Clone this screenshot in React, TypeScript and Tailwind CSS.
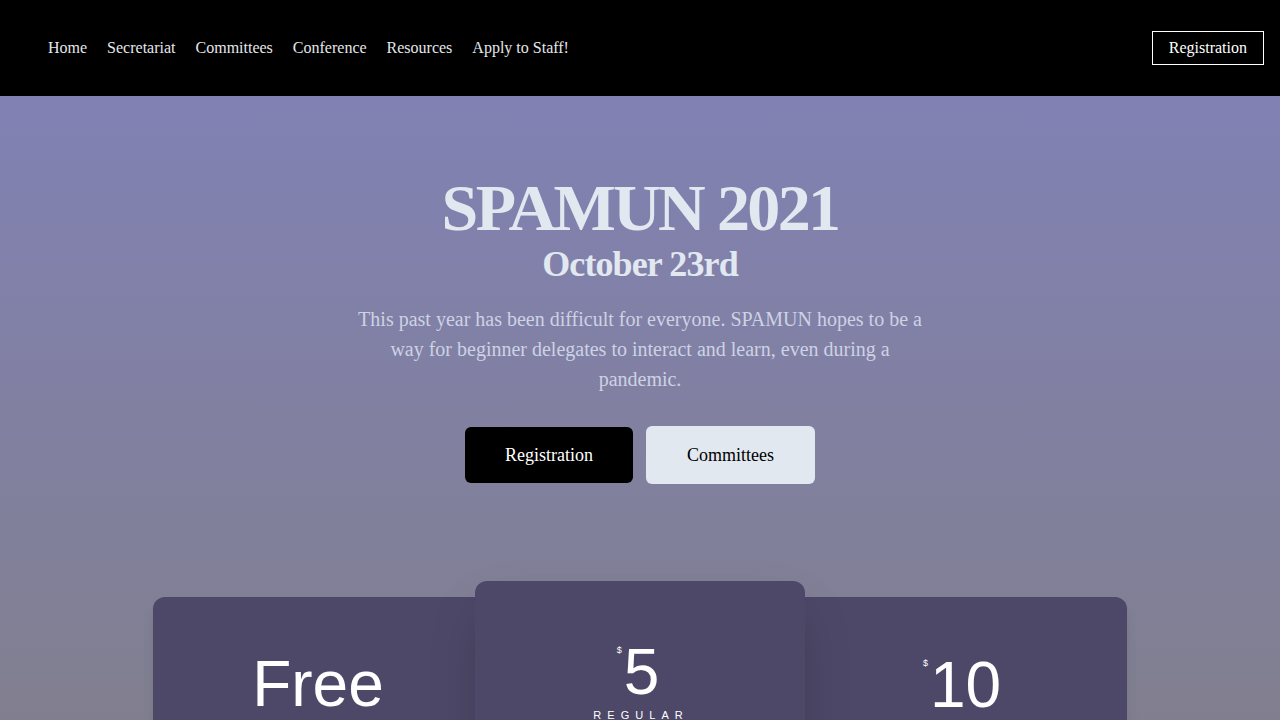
const navLinks = ["Home", "Secretariat", "Committees", "Conference", "Resources", "Apply to Staff!"];

const serif = { fontFamily: '"Liberation Serif", "Times New Roman", serif' };

function Price({ amount, label }: { amount: string; label?: string }) {
  return (
    <div className="flex flex-col items-center">
      <div className="flex items-start">
        <span className="text-[9px] leading-none mt-[6px] mr-[2px]">$</span>
        <span className="text-[64px] leading-none">{amount}</span>
      </div>
      {label && (
        <span className="mt-[6px] text-[11px] leading-none tracking-[0.55em] pl-[0.55em]">{label}</span>
      )}
    </div>
  );
}

export default function App() {
  return (
    <div className="w-full" style={serif}>
      {/* Navbar */}
      <header className="h-24 bg-black flex items-center justify-between pl-12 pr-4">
        <nav className="flex gap-5 text-base text-gray-200">
          {navLinks.map((link) => (
            <a key={link} href="#" className="hover:text-white">
              {link}
            </a>
          ))}
        </nav>
        <a href="#" className="border border-white text-white px-4 h-[34px] flex items-center text-base">
          Registration
        </a>
      </header>

      {/* Hero */}
      <section className="h-[624px] overflow-hidden bg-gradient-to-b from-[#8181b4] to-[#817f8f]">
        <div className="pt-[78px] flex flex-col items-center text-center">
          <h1 className="text-[66px] leading-[68px] font-bold tracking-[-0.04em] text-slate-200">SPAMUN 2021</h1>
          <h2 className="mt-[2px] text-4xl leading-10 font-bold tracking-[-0.025em] text-slate-200">October 23rd</h2>
          <p className="mt-5 max-w-[580px] text-xl leading-[30px] text-[#cdd2e4]">
            This past year has been difficult for everyone. SPAMUN hopes to be a way for beginner delegates to
            interact and learn, even during a pandemic.
          </p>
          <div className="mt-8 flex items-center gap-[13px]">
            <button className="w-[168px] h-14 rounded-md bg-black text-white text-lg">Registration</button>
            <button className="w-[169px] h-[58px] rounded-md bg-slate-200 text-black text-lg">Committees</button>
          </div>
        </div>

        {/* Pricing */}
        <div
          className="mt-[97px] flex justify-center items-start text-white"
          style={{ fontFamily: '"Liberation Sans", Arial, Helvetica, sans-serif' }}
        >
          <div className="w-[322px] h-[400px] mt-4 rounded-l-xl bg-[#4d4868] shadow-lg flex justify-center pt-[55px] pl-2">
            <span className="text-[64px] leading-none">Free</span>
          </div>
          <div className="relative z-10 w-[330px] h-[420px] rounded-t-xl bg-[#4d4868] shadow-2xl flex justify-center pt-[59px] pr-1">
            <Price amount="5" label="REGULAR" />
          </div>
          <div className="w-[322px] h-[400px] mt-4 rounded-r-xl bg-[#4d4868] shadow-lg flex justify-center pt-[56px] pr-2">
            <Price amount="10" />
          </div>
        </div>
      </section>
    </div>
  );
}
